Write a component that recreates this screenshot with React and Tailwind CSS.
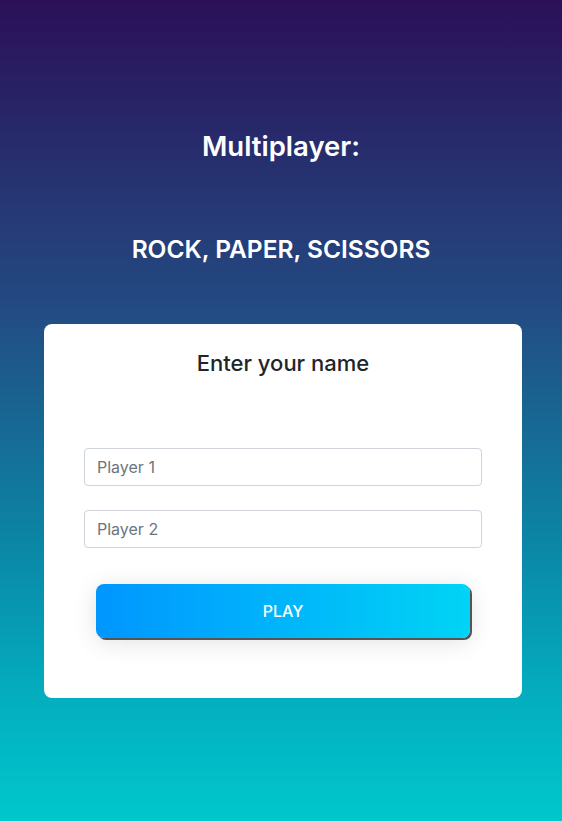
export default function App() {
  return (
    <div
      className="min-h-screen w-full bg-[linear-gradient(to_bottom,#2b1058_0%,#234a82_37%,#0a8aa8_68%,#03aebf_85%,#00c8cc_100%)] font-['Inter','Liberation_Sans',sans-serif]"
    >
      <div className="flex flex-col items-center pt-[128px]">
        <h1 className="text-[27.5px] leading-[36px] font-semibold text-white">Multiplayer:</h1>
        <h2 className="mt-[69px] text-[24.5px] leading-[32px] font-semibold text-white">ROCK, PAPER, SCISSORS</h2>
      </div>

      <div className="ml-[44px] mr-[40px] mt-[59px] rounded-[8px] bg-white px-[40px] pt-[24px] pb-[60px]">
        <h3 className="text-center text-[22px] leading-[30px] font-medium text-[#212529]">Enter your name</h3>
        <div className="mt-[70px] flex flex-col gap-[24px]">
          <input
            type="text"
            placeholder="Player 1"
            className="h-[38px] w-full rounded-[4px] border border-[#ced4da] px-[12px] text-[16px] text-[#495057] placeholder:text-[#6c757d] outline-none"
          />
          <input
            type="text"
            placeholder="Player 2"
            className="h-[38px] w-full rounded-[4px] border border-[#ced4da] px-[12px] text-[16px] text-[#495057] placeholder:text-[#6c757d] outline-none"
          />
        </div>
        <div className="mt-[36px] px-[12px]">
          <button className="h-[54px] w-full rounded-[8px] bg-[linear-gradient(to_right,#0096ff,#00d4f5)] text-[16px] font-medium text-white shadow-[2px_2px_0_#555,0_4px_24px_rgba(0,0,0,0.12)]">
            PLAY
          </button>
        </div>
      </div>
    </div>
  );
}
